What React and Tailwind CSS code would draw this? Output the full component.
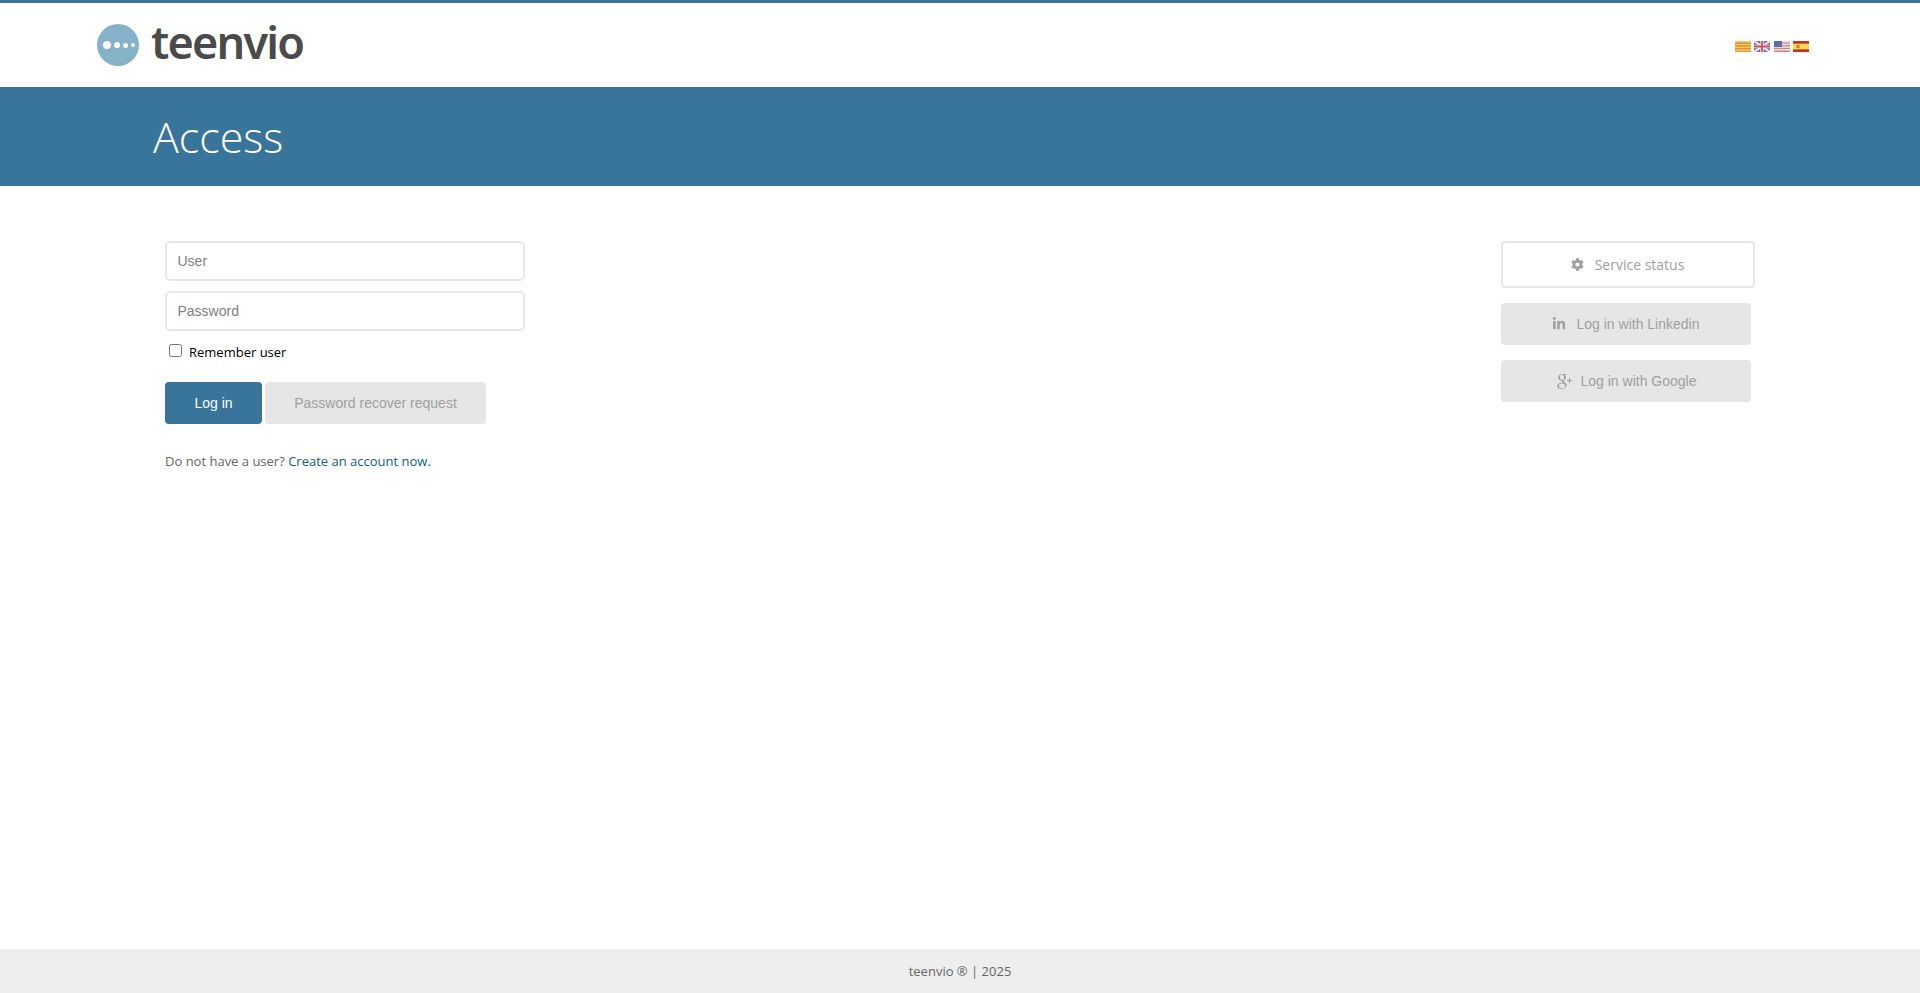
import { FaCog, FaLinkedinIn } from "react-icons/fa";
import { TiSocialGooglePlus } from "react-icons/ti";

function FlagCat() {
  return (
    <svg width="16" height="11" viewBox="0 0 16 11">
      <rect width="16" height="11" fill="#f3cf5e" />
      <rect y="1.5" width="16" height="1.4" fill="#dc8a45" />
      <rect y="4.2" width="16" height="1.4" fill="#dc8a45" />
      <rect y="6.9" width="16" height="1.4" fill="#dc8a45" />
      <rect y="9.6" width="16" height="1.4" fill="#d9a53b" />
    </svg>
  );
}

function FlagUk() {
  return (
    <svg width="16" height="11" viewBox="0 0 16 11">
      <rect width="16" height="11" fill="#6a70a8" />
      <path d="M0 0L16 11M16 0L0 11" stroke="#efe4e6" strokeWidth="2.2" />
      <path d="M8 0V11M0 5.5H16" stroke="#efe4e6" strokeWidth="3.6" />
      <path d="M8 0V11M0 5.5H16" stroke="#c9525c" strokeWidth="1.8" />
    </svg>
  );
}

function FlagUs() {
  return (
    <svg width="16" height="11" viewBox="0 0 16 11">
      <rect width="16" height="11" fill="#f3e8e8" />
      <rect y="1.4" width="16" height="1.3" fill="#d88388" />
      <rect y="4.1" width="16" height="1.3" fill="#d88388" />
      <rect y="6.8" width="16" height="1.3" fill="#d88388" />
      <rect y="9.5" width="16" height="1.5" fill="#d88388" />
      <rect width="8" height="6" fill="#5a6cb5" />
    </svg>
  );
}

function FlagEs() {
  return (
    <svg width="16" height="11" viewBox="0 0 16 11">
      <rect width="16" height="11" fill="#c9302a" />
      <rect y="2.7" width="16" height="5.6" fill="#f5d94a" />
      <rect x="3.5" y="4" width="3" height="3" fill="#cf7a3a" />
    </svg>
  );
}

function Logo() {
  return (
    <div className="flex items-center gap-[12px]">
      <div className="w-[42px] h-[42px] rounded-full bg-[#84b2c8] flex items-center pl-[6px] gap-[3px]">
        <span className="w-[8px] h-[8px] shrink-0 rounded-full bg-white" />
        <span className="w-[6px] h-[6px] shrink-0 rounded-full bg-white" />
        <span className="w-[5px] h-[5px] shrink-0 rounded-full bg-white" />
        <span className="w-[4px] h-[4px] shrink-0 rounded-full bg-white" />
      </div>
      <span className="font-['Noto_Sans',sans-serif] font-semibold text-[45px] leading-none text-[#4a4a4a] tracking-[-1.8px] -mt-[8px]">teenvio</span>
    </div>
  );
}

export default function App() {
  return (
    <div className="min-h-[993px] flex flex-col bg-white font-['Liberation_Sans',sans-serif]">
      <header className="h-[87px] border-t-[3px] border-[#39749b] flex items-center justify-between pl-[97px] pr-[111px]">
        <Logo />
        <div className="flex items-center gap-[3.3px] mt-[3px]">
          <FlagCat />
          <FlagUk />
          <FlagUs />
          <FlagEs />
        </div>
      </header>
      <div className="h-[99px] bg-[#39749b] flex items-center pl-[153px]">
        <h1 className="font-['Open_Sans',sans-serif] font-light text-[43px] text-white leading-none">Access</h1>
      </div>
      <main className="flex-1 flex justify-between pl-[165px] pr-[165px] pt-[55px]">
        <div className="w-[360px]">
          <input placeholder="User" className="block w-full h-[40px] border-2 border-[#e8e8e8] rounded-[5px] px-[10.5px] text-[14px] placeholder:text-[#808080] outline-none" />
          <input placeholder="Password" className="block w-full h-[40px] mt-[10px] border-2 border-[#e8e8e8] rounded-[5px] px-[10.5px] text-[14px] placeholder:text-[#808080] outline-none" />
          <label className="flex items-center mt-[11px] pl-[4px] font-['Open_Sans',sans-serif] text-[13px] leading-[20px] text-black">
            <input type="checkbox" className="w-[13px] h-[13px] mr-[7px] -mt-[3px]" />
            Remember user
          </label>
          <div className="flex gap-[3px] mt-[20px]">
            <button className="w-[97px] h-[42px] bg-[#39749b] text-white text-[14px] rounded-[4px]">Log in</button>
            <button className="w-[221px] h-[42px] bg-[#e6e6e6] text-[#a0a0a0] text-[14px] rounded-[4px]">Password recover request</button>
          </div>
          <p className="mt-[27px] font-['Open_Sans',sans-serif] text-[13px] leading-[20px] text-[#666666]">
            Do not have a user? <a href="#" className="text-[#0f5f75]">Create an account now.</a>
          </p>
        </div>
        <div className="w-[254px]">
          <button className="w-full h-[47px] pr-[1px] border-2 border-[#e8e8e8] rounded-[4px] flex items-center justify-center gap-[11px] font-['Open_Sans',sans-serif] text-[14px] text-[#a0a0a0]">
            <FaCog className="w-[13px] h-[13px] text-[#a0a0a0]" />
            Service status
          </button>
          <button className="w-[250px] h-[42px] mt-[15px] pr-[1px] bg-[#e6e6e6] rounded-[4px] flex items-center justify-center gap-[11px] text-[14px] text-[#a0a0a0]">
            <FaLinkedinIn className="w-[14px] h-[14px] text-[#a0a0a0]" />
            Log in with Linkedin
          </button>
          <button className="w-[250px] h-[42px] mt-[15px] pr-[4px] bg-[#e6e6e6] rounded-[4px] flex items-center justify-center gap-[5px] text-[14px] text-[#a0a0a0]">
            <TiSocialGooglePlus className="w-[24px] h-[24px] text-[#a0a0a0]" />
            Log in with Google
          </button>
        </div>
      </main>
      <footer className="h-[44px] pt-[1px] bg-[#eeeeee] flex items-center justify-center font-['Open_Sans',sans-serif] text-[13px] text-[#666666]">
        teenvio ® | 2025
      </footer>
    </div>
  );
}
